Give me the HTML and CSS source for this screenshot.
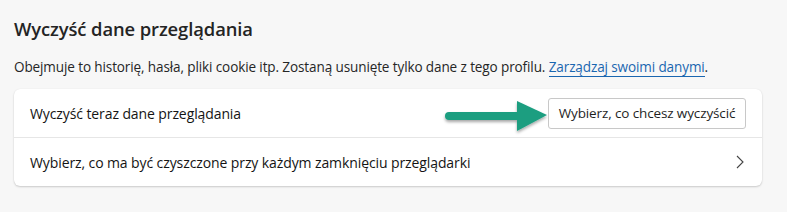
FILE: index.html
```html
<!DOCTYPE html>
<html lang="pl">
<head>
<meta charset="utf-8">
<link rel="stylesheet" href="styles.css">
</head>
<body>
<main class="page">
  <h1 class="title">Wyczyść dane przeglądania</h1>
  <p class="desc">Obejmuje to historię, hasła, pliki cookie itp. Zostaną usunięte tylko dane z tego profilu. <a class="link" href="#">Zarządzaj swoimi danymi</a>.</p>
  <section class="card">
    <div class="row">
      <span class="label">Wyczyść teraz dane przeglądania</span>
      <div class="action">
        <svg class="arrow" width="110" height="40" viewBox="0 0 110 40">
          <defs>
            <filter id="sh" x="-20%" y="-40%" width="140%" height="180%">
              <feDropShadow dx="0" dy="2" stdDeviation="1.6" flood-color="#000" flood-opacity="0.35"/>
            </filter>
          </defs>
          <g filter="url(#sh)">
            <line x1="8" y1="20" x2="80" y2="20" stroke="#1a9e80" stroke-width="8" stroke-linecap="round"/>
            <polygon points="76,5 106,19 76,35" fill="#1a9e80"/>
          </g>
        </svg>
        <button class="btn" type="button">Wybierz, co chcesz wyczyścić</button>
      </div>
    </div>
    <div class="row row-link">
      <span class="label">Wybierz, co ma być czyszczone przy każdym zamknięciu przeglądarki</span>
      <svg class="chev" width="10" height="16" viewBox="0 0 10 16"><path d="M2 2 L8 8 L2 14" fill="none" stroke="#444" stroke-width="1.1"/></svg>
    </div>
  </section>
</main>
</body>
</html>
```

FILE: styles.css
```css
html, body {
  margin: 0;
  padding: 0;
  background: #f7f7f7;
}
body {
  font-family: "Open Sans", "Noto Sans", "DejaVu Sans", sans-serif;
  color: #1f1f1f;
  width: 787px;
  height: 212px;
  overflow: hidden;
}
.page {
  padding: 16px 25px 0 14px;
}
.title {
  margin: 0;
  font-size: 18.4px;
  font-weight: 600;
  line-height: 26px;
  letter-spacing: -0.1px;
  color: #242424;
}
.desc {
  margin: 15px 0 0;
  font-size: 13.55px;
  line-height: 20px;
  letter-spacing: -0.12px;
  color: #262626;
}
.link {
  color: #1a66b0;
  text-decoration: none;
  border-bottom: 1px solid #1a66b0;
}
.card {
  margin-top: 12px;
  background: #fff;
  border-radius: 6px;
  box-shadow: 0 1px 2px rgba(0,0,0,0.18), 0 0 1px rgba(0,0,0,0.08);
  display: flex;
  flex-direction: column;
}
.row {
  display: flex;
  align-items: center;
  justify-content: space-between;
  padding: 0 16px;
  height: 48px;
}
.row + .row {
  border-top: 1px solid #e6e6e6;
}
.label {
  font-size: 14px;
  font-weight: 500;
  letter-spacing: -0.1px;
  color: #141414;
}
.action {
  display: flex;
  align-items: center;
}
.arrow {
  display: block;
  margin-right: -3px;
  margin-top: 6px;
}
.btn {
  font-family: inherit;
  font-size: 13.5px;
  letter-spacing: -0.12px;
  color: #1f1f1f;
  background: #fff;
  border: 1px solid #c8c8c8;
  border-radius: 3px;
  height: 31px;
  width: 198px;
  padding: 0;
  margin-right: 0;
}
.row-link {
  padding-right: 17px;
}
.chev {
  display: block;
}
```
